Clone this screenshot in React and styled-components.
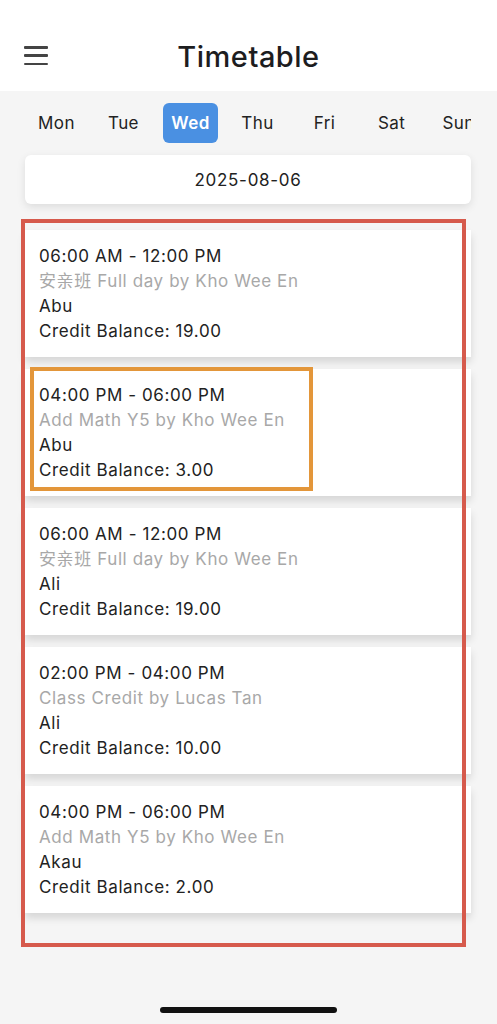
import React from "react";
import styled, { createGlobalStyle } from "styled-components";

const Global = createGlobalStyle`
  html, body { margin: 0; padding: 0; }
  body {
    background: #f5f5f5;
    font-family: Inter, "Noto Sans", "Noto Sans CJK SC", sans-serif;
    color: #222;
    -webkit-font-smoothing: antialiased;
  }
`;

const Page = styled.div`
  width: 497px;
  min-height: 1024px;
  background: #f5f5f5;
  position: relative;
  overflow: hidden;
`;

const Header = styled.header`
  height: 91px;
  background: #fff;
  position: relative;
  display: flex;
  align-items: flex-end;
  justify-content: center;
  padding-bottom: 17px;
  box-sizing: border-box;
`;

const Title = styled.h1`
  margin: 0;
  font-size: 29px;
  font-weight: 500;
  letter-spacing: 0.5px;
  color: #1d1d1f;
`;

const MenuButton = styled.button`
  position: absolute;
  left: 24px;
  top: 46px;
  width: 24px;
  height: 19px;
  padding: 0;
  border: 0;
  background: transparent;
  display: flex;
  flex-direction: column;
  justify-content: space-between;
  span {
    display: block;
    height: 2.5px;
    border-radius: 1px;
    background: #444;
  }
`;

const Tabs = styled.nav`
  display: flex;
  width: 448px;
  margin: 12px 0 0 23px;
  overflow: hidden;
  white-space: nowrap;
`;

const TabSlot = styled.div`
  flex: 0 0 67px;
  display: flex;
  justify-content: center;
`;

const Tab = styled.button`
  height: 40px;
  padding: 0 8px;
  min-width: 55px;
  border: 0;
  border-radius: 6px;
  font-family: inherit;
  font-size: 17px;
  letter-spacing: 0.4px;
  font-weight: ${(p) => (p.$active ? 600 : 400)};
  color: ${(p) => (p.$active ? "#fff" : "#222")};
  background: ${(p) => (p.$active ? "#4a90e2" : "transparent")};
`;

const DateCard = styled.div`
  margin: 12px 26px 0 25px;
  height: 49px;
  background: #fff;
  border-radius: 6px;
  box-shadow: 0 3px 8px rgba(0, 0, 0, 0.1);
  display: flex;
  align-items: center;
  justify-content: center;
  font-size: 17px;
  letter-spacing: 0.7px;
`;

const List = styled.div`
  position: relative;
  margin: 26px 26px 0 25px;
  display: flex;
  flex-direction: column;
  gap: 12px;
`;

const Card = styled.div`
  position: relative;
  height: 127px;
  background: #fff;
  box-shadow: 0 5px 8px rgba(0, 0, 0, 0.13);
  padding: 14px 14px 0;
  box-sizing: border-box;
  display: flex;
  flex-direction: column;
`;

const Line = styled.div`
  font-size: 17px;
  line-height: 25px;
  letter-spacing: 0.6px;
  color: ${(p) => (p.$muted ? "#a8a8a8" : "#222")};
`;

const RedFrame = styled.div`
  position: absolute;
  left: -4px;
  top: -11px;
  width: 445px;
  height: 728px;
  border: 4px solid #d65a4c;
  box-sizing: border-box;
  pointer-events: none;
`;

const OrangeFrame = styled.div`
  position: absolute;
  left: 5px;
  top: -2px;
  width: 283px;
  height: 124px;
  border: 4px solid #e3963a;
  box-sizing: border-box;
  pointer-events: none;
`;

const HomeIndicator = styled.div`
  position: absolute;
  left: 160px;
  bottom: 11px;
  width: 177px;
  height: 6px;
  border-radius: 3px;
  background: #111;
`;

const days = ["Mon", "Tue", "Wed", "Thu", "Fri", "Sat", "Sun"];

const lessons = [
  { time: "06:00 AM - 12:00 PM", cls: "安亲班 Full day by Kho Wee En", name: "Abu", credit: "19.00" },
  { time: "04:00 PM - 06:00 PM", cls: "Add Math Y5 by Kho Wee En", name: "Abu", credit: "3.00", mark: true },
  { time: "06:00 AM - 12:00 PM", cls: "安亲班 Full day by Kho Wee En", name: "Ali", credit: "19.00" },
  { time: "02:00 PM - 04:00 PM", cls: "Class Credit by Lucas Tan", name: "Ali", credit: "10.00" },
  { time: "04:00 PM - 06:00 PM", cls: "Add Math Y5 by Kho Wee En", name: "Akau", credit: "2.00" },
];

export default function App() {
  return (
    <Page>
      <Global />
      <Header>
        <MenuButton aria-label="menu">
          <span />
          <span />
          <span />
        </MenuButton>
        <Title>Timetable</Title>
      </Header>
      <Tabs>
        {days.map((d) => (
          <TabSlot key={d}>
            <Tab $active={d === "Wed"}>{d}</Tab>
          </TabSlot>
        ))}
      </Tabs>
      <DateCard>2025-08-06</DateCard>
      <List>
        {lessons.map((l, i) => (
          <Card key={i}>
            <Line>{l.time}</Line>
            <Line $muted>{l.cls}</Line>
            <Line>{l.name}</Line>
            <Line>Credit Balance: {l.credit}</Line>
            {l.mark && <OrangeFrame />}
          </Card>
        ))}
        <RedFrame />
      </List>
      <HomeIndicator />
    </Page>
  );
}
